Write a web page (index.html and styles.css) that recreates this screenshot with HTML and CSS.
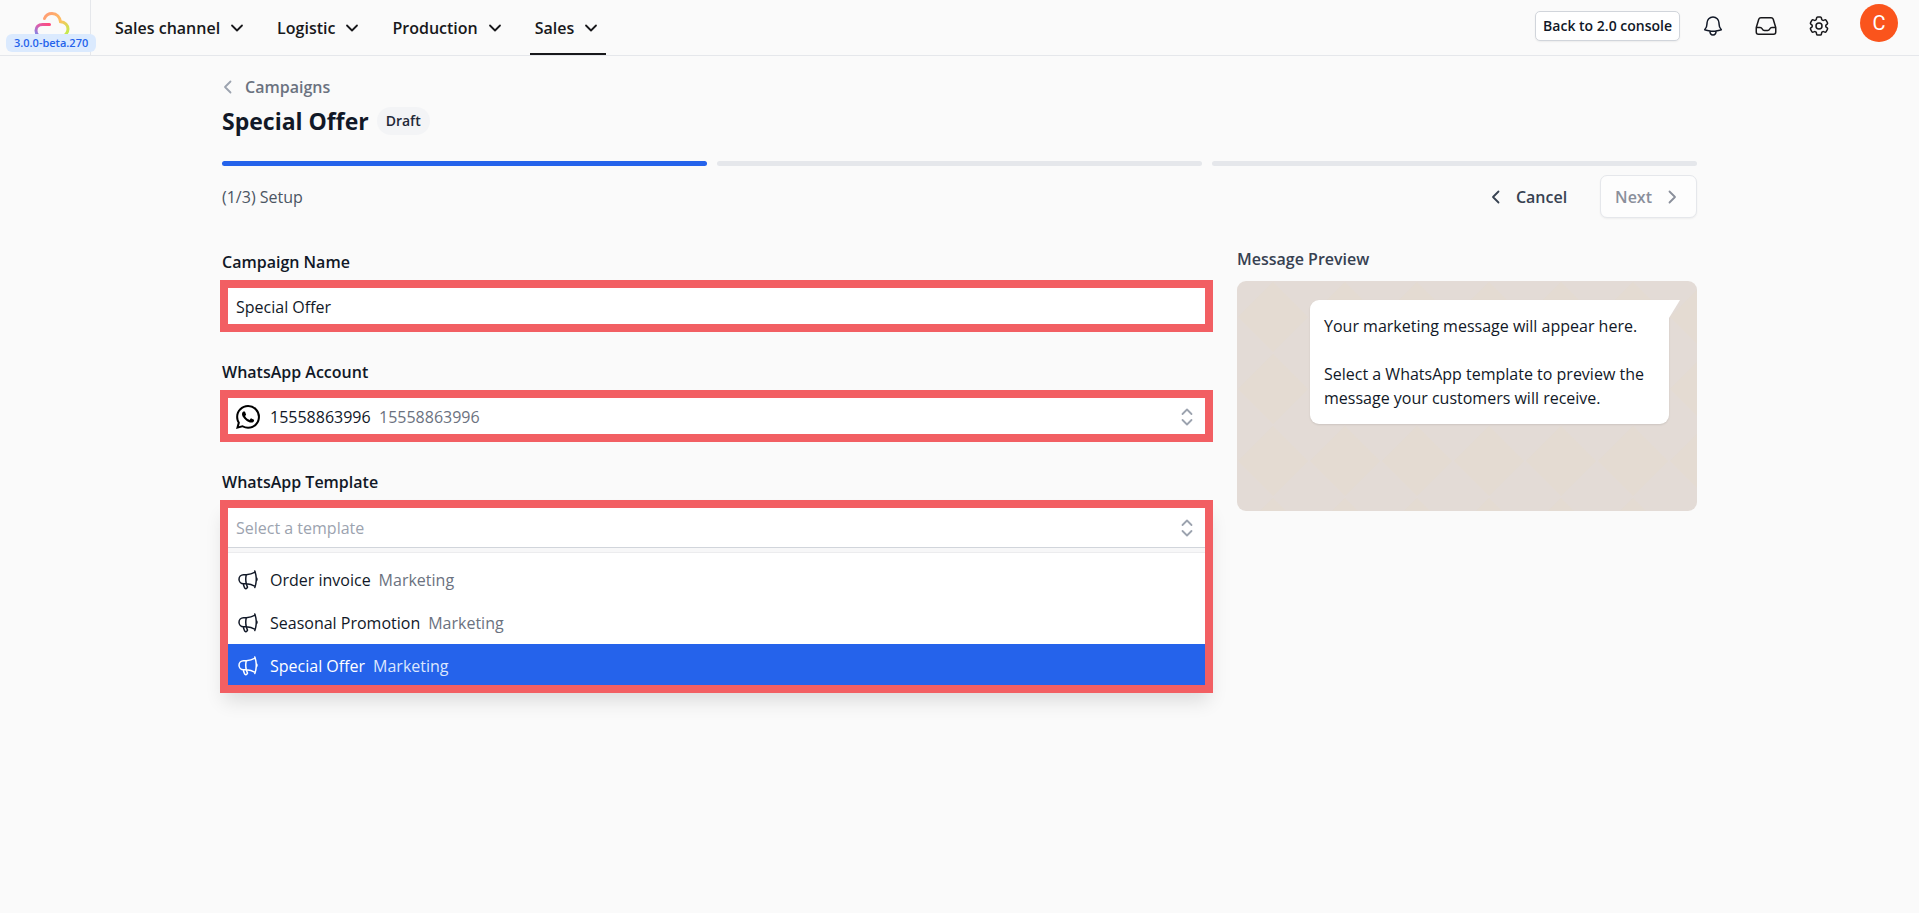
FILE: index.html
```
<!DOCTYPE html>
<html lang="en">
<head>
<meta charset="utf-8">
<meta name="viewport" content="width=device-width, initial-scale=1">
<title>Special Offer - Campaigns</title>
<link rel="stylesheet" href="styles.css">
</head>
<body>
<svg class="sprite" aria-hidden="true">
  <symbol id="chevron-down" viewBox="0 0 20 20"><path d="M5 7.5l5 5 5-5"/></symbol>
  <symbol id="chevron-left" viewBox="0 0 20 20"><path d="M12.5 4.5L7 10l5.500 5.500"/></symbol>
  <symbol id="chevron-right" viewBox="0 0 20 20"><path d="M7.500 4.500L13 10l-5.500 5.500"/></symbol>
  <symbol id="up-down" viewBox="0 0 20 20"><path d="M5.500 7L10 2.500 14.500 7M5.500 13l4.500 4.500 4.500-4.500"/></symbol>
  <symbol id="megaphone" viewBox="0 0 24 24"><path d="M10.340 15.840c-.688-.06-1.386-.09-2.090-.09H7.500a4.500 4.500 0 110-9h.75c.704 0 1.402-.03 2.090-.09m0 9.180c.253.962.584 1.892.985 2.783.247.550.060 1.210-.463 1.511l-.657.380c-.551.318-1.260.117-1.527-.461a20.845 20.845 0 01-1.440-4.282m3.102.069a18.030 18.030 0 01-.590-4.590c0-1.586.205-3.124.590-4.590m0 9.180a23.848 23.848 0 018.835 2.535M10.340 6.660a23.847 23.847 0 008.835-2.535m0 0A23.740 23.740 0 0018.795 3m.380 1.125a23.910 23.910 0 011.014 5.395m-1.014 8.855c-.118.380-.245.754-.380 1.125m.380-1.125a23.910 23.910 0 001.014-5.395m0-3.460c.495.413.811 1.035.811 1.730 0 .695-.316 1.317-.811 1.730m0-3.460a24.347 24.347 0 010 3.460"/></symbol>
</svg>

<header class="topbar">
  <a class="brand" href="#" aria-label="Home">
    <svg class="brand-logo" viewBox="0 0 36 28" aria-hidden="true">
      <defs>
        <linearGradient id="warm" x1="0" y1="0" x2="1" y2="1"><stop offset="0" stop-color="#ff9a76"/><stop offset=".5" stop-color="#fdc060"/><stop offset="1" stop-color="#b8f34a"/></linearGradient>
        <linearGradient id="cool" x1="1" y1="0" x2="0" y2="1"><stop offset="0" stop-color="#ff4a7d"/><stop offset=".5" stop-color="#d860b0"/><stop offset="1" stop-color="#6f8ff5"/></linearGradient>
      </defs>
      <path d="M10.500 7.500C12 4 15 2.500 18 2.500c5 0 7.800 3.800 8.500 8.200 4.500.3 7.500 3.500 7.500 7.300 0 4-3 7.500-7 7.500" stroke="url(#warm)"/>
      <path d="M15.500 13.500H8.500C4.500 13.500 2 16 2 19.500s2.500 6 6.500 6" stroke="url(#cool)"/>
    </svg>
    <span class="version">3.0.0-beta.270</span>
  </a>
  <nav class="menu" aria-label="Main">
    <button class="menu-item" type="button">Sales channel<svg class="icon"><use href="#chevron-down"/></svg></button>
    <button class="menu-item" type="button">Logistic<svg class="icon"><use href="#chevron-down"/></svg></button>
    <button class="menu-item" type="button">Production<svg class="icon"><use href="#chevron-down"/></svg></button>
    <button class="menu-item is-active" type="button">Sales<svg class="icon"><use href="#chevron-down"/></svg></button>
  </nav>
  <div class="tools">
    <a class="back-button" href="#">Back to 2.0 console</a>
    <button class="tool dark" type="button" aria-label="Notifications"><svg class="tool-icon" viewBox="0 0 24 24"><path d="M14.857 17.082a23.848 23.848 0 005.454-1.310A8.967 8.967 0 0118 9.750V9A6 6 0 006 9v.75a8.967 8.967 0 01-2.312 6.022c1.733.640 3.560 1.085 5.455 1.310m5.714 0a24.255 24.255 0 01-5.714 0m5.714 0a3 3 0 11-5.714 0"/></svg></button>
    <button class="tool" type="button" aria-label="Inbox"><svg class="tool-icon" viewBox="0 0 24 24"><path d="M2.250 13.500h3.860a2.250 2.250 0 012.012 1.244l.256.512a2.250 2.250 0 002.013 1.244h3.218a2.250 2.250 0 002.013-1.244l.256-.512a2.250 2.250 0 012.013-1.244h3.859m-19.500.338V18a2.250 2.250 0 002.250 2.250h15A2.250 2.250 0 0021.750 18v-4.162c0-.224-.034-.447-.100-.661L19.240 5.338a2.250 2.250 0 00-2.150-1.588H6.911a2.250 2.250 0 00-2.150 1.588L2.350 13.177a2.250 2.250 0 00-.100.661z"/></svg></button>
    <button class="tool" type="button" aria-label="Settings"><svg class="tool-icon" viewBox="0 0 24 24"><path d="M9.594 3.940c.090-.542.560-.940 1.110-.940h2.593c.550 0 1.020.398 1.110.940l.213 1.281c.063.374.313.686.645.870.074.040.147.083.220.127.324.196.720.257 1.075.124l1.217-.456a1.125 1.125 0 011.370.490l1.296 2.247a1.125 1.125 0 01-.260 1.431l-1.003.827c-.293.240-.438.613-.431.992a6.759 6.759 0 010 .255c-.007.378.138.750.430.990l1.005.828c.424.350.534.954.260 1.430l-1.298 2.247a1.125 1.125 0 01-1.369.491l-1.217-.456c-.355-.133-.750-.072-1.076.124a6.570 6.570 0 01-.220.128c-.331.183-.581.495-.644.869l-.213 1.280c-.090.543-.560.941-1.110.941h-2.594c-.550 0-1.020-.398-1.110-.940l-.213-1.281c-.062-.374-.312-.686-.644-.870a6.520 6.520 0 01-.220-.127c-.325-.196-.720-.257-1.076-.124l-1.217.456a1.125 1.125 0 01-1.369-.490l-1.297-2.247a1.125 1.125 0 01.260-1.431l1.004-.827c.292-.240.437-.613.430-.992a6.932 6.932 0 010-.255c.007-.378-.138-.750-.430-.990l-1.004-.828a1.125 1.125 0 01-.260-1.430l1.297-2.247a1.125 1.125 0 011.370-.491l1.216.456c.356.133.751.072 1.076-.124.072-.044.146-.087.220-.128.332-.183.582-.495.644-.869l.214-1.281z"/><circle cx="12" cy="12" r="3"/></svg></button>
    <button class="avatar" type="button" aria-label="Account">C</button>
  </div>
</header>

<main class="page">
  <a class="breadcrumb" href="#"><svg class="icon"><use href="#chevron-left"/></svg>Campaigns</a>
  <div class="title-row">
    <h1 class="title">Special Offer</h1>
    <span class="status">Draft</span>
  </div>

  <div class="steps" role="progressbar" aria-label="Campaign setup" aria-valuemin="0" aria-valuemax="3" aria-valuenow="1">
    <span class="step is-done"></span><span class="step"></span><span class="step"></span>
  </div>
  <div class="step-bar">
    <p class="step-name">(1/3) Setup</p>
    <div class="step-actions">
      <button class="action cancel" type="button"><svg class="icon"><use href="#chevron-left"/></svg>Cancel</button>
      <button class="action next" type="button" disabled>Next<svg class="icon"><use href="#chevron-right"/></svg></button>
    </div>
  </div>

  <div class="columns">
    <form class="form">
      <div class="field">
        <label class="label" for="name">Campaign Name</label>
        <div class="frame"><input class="control" id="name" type="text" value="Special Offer"></div>
      </div>
      <div class="field">
        <label class="label" for="account">WhatsApp Account</label>
        <div class="frame">
          <div class="control account">
            <svg class="whatsapp" viewBox="0 0 24 24" aria-hidden="true"><path d="M17.472 14.382c-.297-.149-1.758-.867-2.030-.967-.273-.099-.471-.148-.670.150-.197.297-.767.966-.940 1.164-.173.199-.347.223-.644.075-.297-.150-1.255-.463-2.390-1.475-.883-.788-1.480-1.761-1.653-2.059-.173-.297-.018-.458.130-.606.134-.133.298-.347.446-.520.149-.174.198-.298.298-.497.099-.198.050-.371-.025-.520-.075-.149-.669-1.612-.916-2.207-.242-.579-.487-.500-.669-.510-.173-.008-.371-.010-.570-.010-.198 0-.520.074-.792.372-.272.297-1.040 1.016-1.040 2.479 0 1.462 1.065 2.875 1.213 3.074.149.198 2.096 3.200 5.077 4.487.709.306 1.262.489 1.694.625.712.227 1.360.195 1.871.118.571-.085 1.758-.719 2.006-1.413.248-.694.248-1.289.173-1.413-.074-.124-.272-.198-.570-.347m-5.421 7.403h-.004a9.870 9.870 0 01-5.031-1.378l-.361-.214-3.741.982.998-3.648-.235-.374a9.860 9.860 0 01-1.510-5.260c.001-5.450 4.436-9.884 9.888-9.884 2.640 0 5.122 1.030 6.988 2.898a9.825 9.825 0 012.893 6.994c-.003 5.450-4.437 9.884-9.885 9.884m8.413-18.297A11.815 11.815 0 0012.050 0C5.495 0 .160 5.335.157 11.892c0 2.096.547 4.142 1.588 5.945L.057 24l6.305-1.654a11.882 11.882 0 005.683 1.448h.005c6.554 0 11.890-5.335 11.893-11.893a11.821 11.821 0 00-3.480-8.413z"/></svg>
            <select class="account-select" id="account"><option>15558863996</option></select>
            <span class="muted">15558863996</span>
            <svg class="icon updown"><use href="#up-down"/></svg>
          </div>
        </div>
      </div>
      <div class="field">
        <label class="label" for="template">WhatsApp Template</label>
        <div class="frame is-open">
          <div class="combo">
            <input class="control" id="template" type="text" placeholder="Select a template" role="combobox" aria-expanded="true" aria-controls="template-list">
            <svg class="icon updown"><use href="#up-down"/></svg>
          </div>
          <ul class="options" id="template-list" role="listbox" aria-label="Templates">
            <li class="option" role="option"><svg class="option-icon"><use href="#megaphone"/></svg>Order invoice<span class="muted">Marketing</span></li>
            <li class="option" role="option"><svg class="option-icon"><use href="#megaphone"/></svg>Seasonal Promotion<span class="muted">Marketing</span></li>
            <li class="option is-selected" role="option" aria-selected="true"><svg class="option-icon"><use href="#megaphone"/></svg>Special Offer<span class="muted">Marketing</span></li>
          </ul>
        </div>
      </div>
    </form>

    <section class="preview">
      <h2 class="preview-title">Message Preview</h2>
      <div class="chat">
        <div class="bubble">
          <p>Your marketing message will appear here.</p>
          <p>Select a WhatsApp template to preview the message your customers will receive.</p>
        </div>
      </div>
    </section>
  </div>
</main>
</body>
</html>
```

FILE: styles.css
```
*, *::before, *::after { box-sizing: border-box; }

body {
  margin: 0;
  min-height: 100vh;
  background: #fafafa;
  color: #111827;
  font-family: "Segoe UI", "Open Sans", "Noto Sans", sans-serif;
  font-size: 16px;
  line-height: 24px;
}

button, input, select { font: inherit; color: inherit; }
button { padding: 0; border: 0; background: none; cursor: pointer; }
a { color: inherit; text-decoration: none; }
h1, h2, p, ul { margin: 0; padding: 0; }
svg { fill: none; flex: none; }

.sprite { position: absolute; width: 0; height: 0; }

.icon {
  width: 20px;
  height: 20px;
  stroke: currentColor;
  stroke-width: 1.8;
  stroke-linecap: round;
  stroke-linejoin: round;
}

/* Top bar */
.topbar {
  display: flex;
  height: 56px;
  border-bottom: 1px solid #e5e7eb;
}

.brand {
  position: relative;
  width: 91px;
  padding: 11px 0 0 34px;
  border-right: 1px solid #e5e7eb;
}

.brand-logo {
  display: block;
  width: 36px;
  height: 28px;
  stroke-width: 3;
  stroke-linecap: round;
}

.version {
  position: absolute;
  left: 6px;
  bottom: 3px;
  padding: 0 8px;
  border-radius: 6px;
  background: #dbeafe;
  color: #2563eb;
  font-size: 11px;
  font-weight: 600;
  line-height: 18px;
  white-space: nowrap;
}

.menu {
  display: flex;
  gap: 20px;
  padding-left: 19px;
}

.menu-item {
  display: flex;
  align-items: center;
  gap: 7px;
  padding: 2px 5px 0;
  border-bottom: 2px solid transparent;
  color: #18181b;
  font-weight: 600;
  white-space: nowrap;
}

.menu-item.is-active { border-color: #18181b; }

.tools {
  display: flex;
  align-items: center;
  gap: 29px;
  margin-left: auto;
  padding: 0 21px 3px 0;
}

.back-button {
  margin-right: -8px;
  padding: 2px 7px;
  border: 1px solid #d1d5db;
  border-radius: 5px;
  background: #fff;
  box-shadow: 0 1px 2px rgba(0, 0, 0, .06);
  font-size: 14px;
  font-weight: 600;
  white-space: nowrap;
}

.tool { height: 24px; color: #18181b; }
.tool.dark { color: #111827; }

.tool-icon {
  display: block;
  width: 24px;
  height: 24px;
  stroke: currentColor;
  stroke-width: 1.5;
  stroke-linecap: round;
  stroke-linejoin: round;
}

.avatar {
  width: 38px;
  height: 38px;
  margin-bottom: 6px;
  border-radius: 50%;
  background: #fa541c;
  color: #fff;
  font-family: Roboto, sans-serif;
  font-size: 20px;
}

/* Page header */
.page {
  max-width: 1507px;
  margin: 0 auto;
  padding: 19px 16px 32px;
}

.breadcrumb {
  display: inline-flex;
  align-items: center;
  gap: 7px;
  color: #6b7280;
  font-weight: 600;
}

.breadcrumb .icon { margin-left: -4px; color: #9ca3af; }

.title-row {
  display: flex;
  align-items: center;
  gap: 8px;
  margin-top: 2px;
}

.title {
  font-size: 23px;
  font-weight: 700;
  line-height: 32px;
}

.status {
  padding: 2px 9px;
  border-radius: 15px;
  background: #f3f4f6;
  color: #1f2937;
  font-size: 14px;
  font-weight: 600;
}

.steps {
  display: grid;
  grid-template-columns: repeat(3, 1fr);
  gap: 10px;
  margin-top: 24px;
}

.step {
  height: 5px;
  border-radius: 3px;
  background: #e5e7eb;
}

.step.is-done { background: #2563eb; }

.step-bar {
  display: flex;
  align-items: center;
  justify-content: space-between;
  margin-top: 9px;
}

.step-name { color: #4b5563; }
.step-actions { display: flex; gap: 18px; }

.action {
  display: flex;
  align-items: center;
  gap: 10px;
  height: 43px;
  padding: 0 14px;
  border: 1px solid transparent;
  border-radius: 7px;
  color: #374151;
  font-weight: 600;
}

.action.next {
  border-color: #e5e7eb;
  background: #fdfdfd;
  box-shadow: 0 1px 2px rgba(0, 0, 0, .05);
  color: #8a8f9b;
}

/* Form and preview */
.columns {
  display: grid;
  grid-template-columns: minmax(0, 989fr) minmax(0, 460fr);
  gap: 26px;
  margin-top: 29px;
}

.form {
  display: grid;
  align-content: start;
  gap: 28px;
  padding-top: 3px;
}

.label {
  display: block;
  margin-bottom: 6px;
  font-weight: 600;
}

.frame {
  margin: 0 -2px;
  border: 8px solid #f25f63;
  background: #fff;
}

.frame.is-open {
  background: #f7f7f8;
  box-shadow: 0 12px 18px -4px rgba(0, 0, 0, .12);
}

.control {
  display: block;
  width: 100%;
  height: 36px;
  padding: 2px 8px 0;
  border: 0;
  outline: 0;
  background: #fff;
}

.account {
  display: flex;
  align-items: center;
}

.whatsapp {
  width: 24px;
  height: 24px;
  margin-right: 10px;
  fill: #000;
}

.account-select {
  appearance: none;
  padding: 0;
  border: 0;
  outline: 0;
  background: none;
}

.muted { margin-left: 8px; color: #6b7280; }
.updown { margin-left: auto; color: #9ca3af; }

.combo {
  display: flex;
  align-items: center;
  height: 40px;
  padding-right: 8px;
  border-bottom: 1px solid #d1d5db;
  background: #fff;
}

.combo .control { padding-top: 0; }
.combo .control::placeholder { color: #9ca3af; opacity: 1; }

.options {
  max-height: 133px;
  margin-top: 4px;
  padding-top: 5px;
  border-top: 1px solid #ececee;
  background: #fff;
  list-style: none;
  overflow: hidden;
}

.option {
  display: flex;
  align-items: center;
  height: 43px;
  padding: 0 8px;
}

.option-icon {
  width: 24px;
  height: 24px;
  margin-right: 10px;
  stroke: currentColor;
  stroke-width: 1.5;
  stroke-linecap: round;
  stroke-linejoin: round;
}

.option.is-selected { background: #2563eb; color: #fff; }
.option.is-selected .muted { color: #dbe6fe; }

.preview-title {
  color: #374151;
  font-size: 16px;
  font-weight: 600;
  line-height: 24px;
}

.chat {
  min-height: 230px;
  margin-top: 10px;
  padding: 19px 28px 19px 73px;
  border-radius: 9px;
  background-color: #e4dbd2;
  background-image:
    linear-gradient(45deg, #e3dbd6 25%, transparent 26%, transparent 74%, #e3dbd6 75%),
    linear-gradient(-45deg, #e3dbd6 25%, transparent 26%, transparent 74%, #e3dbd6 75%);
  background-size: 72px 72px;
}

.bubble {
  position: relative;
  display: grid;
  gap: 24px;
  padding: 14px;
  border-radius: 9px 0 9px 9px;
  background: #fff;
  box-shadow: 0 1px 2px rgba(0, 0, 0, .1);
}

.bubble::after {
  content: "";
  position: absolute;
  top: 0;
  left: 100%;
  width: 11px;
  height: 18px;
  background: #fff;
  clip-path: polygon(0 0, 100% 0, 0 100%);
}
```
